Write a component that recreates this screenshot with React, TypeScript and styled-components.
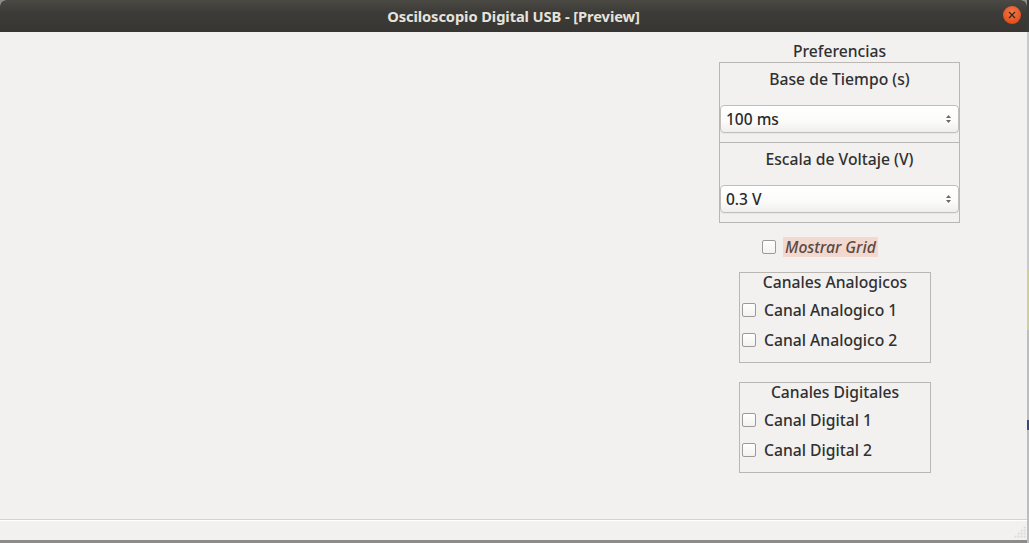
import React from "react";
import styled, { createGlobalStyle } from "styled-components";

const Global = createGlobalStyle`
  html, body { margin: 0; padding: 0; }
  body {
    background: #8c8c8c;
    font-family: "Noto Sans", "DejaVu Sans", sans-serif;
    overflow: hidden;
  }
`;

const Screen = styled.div`
  display: flex;
  width: 1029px;
  height: 543px;
`;

const Window = styled.div`
  width: 1027px;
  height: 540px;
  display: flex;
  flex-direction: column;
  background: #f2f1f0;
  border-radius: 6px 6px 0 0;
  overflow: hidden;
`;

const DesktopEdge = styled.div`
  width: 2px;
  height: 543px;
  background: linear-gradient(
    #3a3a3a 0px, #3a3a3a 32px, #c8c8c8 32px, #c8c8c8 270px, #cfcf9a 270px, #cfcf9a 330px,
    #bdbdbd 330px, #bdbdbd 420px, #3b4a7a 420px, #3b4a7a 430px, #bdbdbd 430px
  );
`;

const TitleBar = styled.div`
  height: 32px;
  flex: none;
  display: flex;
  align-items: center;
  justify-content: center;
  position: relative;
  background: linear-gradient(#4a4944, #3c3b37 40%, #373632);
  color: #e6e3dc;
  font-weight: bold;
  font-size: 14.7px;
  letter-spacing: -0.1px;
`;

const CloseButton = styled.div`
  position: absolute;
  right: 6px;
  top: 6px;
  width: 18px;
  height: 18px;
  border-radius: 50%;
  background: radial-gradient(circle at 50% 35%, #f47a4a, #e5501d 70%, #c9431a);
  display: flex;
  align-items: center;
  justify-content: center;
`;

const Content = styled.div`
  flex: 1;
  display: flex;
  justify-content: flex-end;
  padding-right: 67px;
`;

const Panel = styled.div`
  width: 241px;
  display: flex;
  flex-direction: column;
  color: #303030;
  font-size: 15.7px;
  font-weight: 500;
`;

const PanelTitle = styled.div`
  text-align: center;
  height: 20px;
  line-height: 20px;
  margin-top: 9px;
  margin-bottom: 1px;
`;

const Frame = styled.div`
  border: 1px solid #bab7b2;
  display: flex;
  flex-direction: column;
`;

const Section = styled.div<{ $last?: boolean }>`
  display: flex;
  flex-direction: column;
  height: 79px;
  border-bottom: ${(p) => (p.$last ? "none" : "1px solid #bab7b2")};
`;

const SectionLabel = styled.div`
  text-align: center;
  height: 20px;
  line-height: 20px;
  margin-top: 6px;
  margin-bottom: 16px;
`;

const Combo = styled.div`
  height: 25px;
  border: 1px solid #c2bfba;
  border-radius: 4px;
  background: linear-gradient(#ffffff, #fbfbfa 60%, #efeeec);
  box-shadow: 0 1px 0 rgba(0, 0, 0, 0.04);
  display: flex;
  align-items: center;
  justify-content: space-between;
  padding: 0 6px 1px 5px;
  font-size: 15.5px;
  color: #2a2a2a;
`;

const Arrows = styled.svg`
  width: 7px;
  height: 12px;
`;

const GridRow = styled.div`
  display: flex;
  align-items: center;
  margin: 14px 0 0 43px;
  height: 20px;
`;

const Check = styled.span`
  width: 12px;
  height: 12px;
  border: 1px solid #9d9a95;
  border-radius: 2px;
  background: linear-gradient(#ffffff, #f3f2f0);
  flex: none;
`;

const GridLabel = styled.span`
  margin-left: 7px;
  background: #f2d8ce;
  padding: 0 2px;
  height: 20px;
  line-height: 20px;
  font-style: italic;
  color: #5a4a44;
`;

const Group = styled.div<{ $top: number }>`
  margin: ${(p) => p.$top}px 0 0 20px;
  width: 190px;
  height: 89px;
  border: 1px solid #bab7b2;
  display: flex;
  flex-direction: column;
`;

const GroupTitle = styled.div`
  text-align: center;
  height: 18px;
  line-height: 18px;
  margin-bottom: 4px;
`;

const GroupRow = styled.div`
  display: flex;
  align-items: center;
  height: 30px;
  padding-left: 2px;
`;

const RowLabel = styled.span`
  margin-left: 8px;
`;

const StatusBar = styled.div`
  height: 20px;
  flex: none;
  border-top: 1px solid #d5d3cf;
  box-shadow: inset 0 1px 0 #ffffff;
  position: relative;
`;

const Grip = styled.svg`
  position: absolute;
  right: 1px;
  bottom: 2px;
`;

const ArrowIcon = () => (
  <Arrows viewBox="0 0 7 12">
    <path d="M3.5 2 L6 5 L1 5 Z" fill="#6a6763" />
    <path d="M3.5 10 L6 7 L1 7 Z" fill="#6a6763" />
  </Arrows>
);

const Row = ({ label }: { label: string }) => (
  <GroupRow>
    <Check />
    <RowLabel>{label}</RowLabel>
  </GroupRow>
);

export default function App() {
  return (
    <>
      <Global />
      <Screen>
        <Window>
          <TitleBar>
            Osciloscopio Digital USB - [Preview]
            <CloseButton>
              <svg width="8" height="8" viewBox="0 0 8 8">
                <path d="M1 1 L7 7 M7 1 L1 7" stroke="#3a2a22" strokeWidth="1.4" />
              </svg>
            </CloseButton>
          </TitleBar>
          <Content>
            <Panel>
              <PanelTitle>Preferencias</PanelTitle>
              <Frame>
                <Section>
                  <SectionLabel>Base de Tiempo (s)</SectionLabel>
                  <Combo>
                    <span>100 ms</span>
                    <ArrowIcon />
                  </Combo>
                </Section>
                <Section $last>
                  <SectionLabel>Escala de Voltaje (V)</SectionLabel>
                  <Combo>
                    <span>0.3 V</span>
                    <ArrowIcon />
                  </Combo>
                </Section>
              </Frame>
              <GridRow>
                <Check />
                <GridLabel>Mostrar Grid</GridLabel>
              </GridRow>
              <Group $top={15}>
                <GroupTitle>Canales Analogicos</GroupTitle>
                <Row label="Canal Analogico 1" />
                <Row label="Canal Analogico 2" />
              </Group>
              <Group $top={19}>
                <GroupTitle>Canales Digitales</GroupTitle>
                <Row label="Canal Digital 1" />
                <Row label="Canal Digital 2" />
              </Group>
            </Panel>
          </Content>
          <StatusBar>
            <Grip width="12" height="12" viewBox="0 0 12 12">
              {[
                [10, 2], [10, 5], [7, 5], [10, 8], [7, 8], [4, 8], [10, 11], [7, 11], [4, 11], [1, 11],
              ].map(([x, y], i) => (
                <rect key={i} x={x} y={y - 1} width="1.5" height="1.5" fill="#ffffff" stroke="#d4d2ce" strokeWidth="0.5" />
              ))}
            </Grip>
          </StatusBar>
        </Window>
        <DesktopEdge />
      </Screen>
    </>
  );
}
